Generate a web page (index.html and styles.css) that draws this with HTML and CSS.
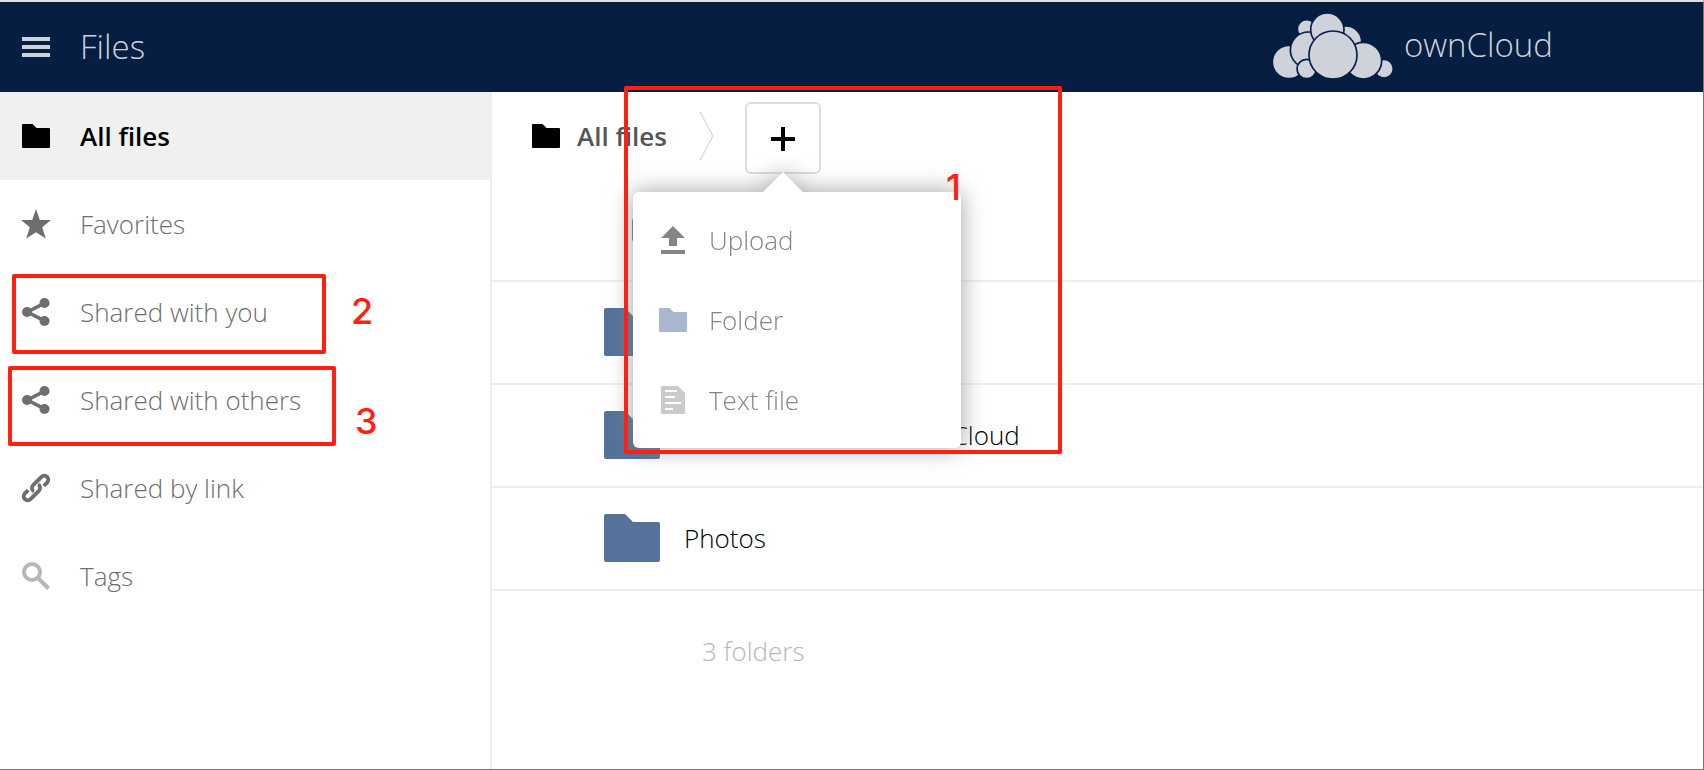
FILE: index.html
```
<!DOCTYPE html>
<html lang="en">
<head>
    <meta charset="UTF-8">
    <meta name="viewport" content="width=device-width, initial-scale=1.0">
    <title>Files - ownCloud</title>
    <link rel="stylesheet" href="styles.css">
</head>
<body>
  <svg class="sprite" aria-hidden="true">
    <symbol id="folder" viewBox="0 0 28 24">
      <path d="M1 0h9.500l4 4H27q1 0 1 1v18q0 1-1 1H1q-1 0-1-1V1q0-1 1-1z"/>
    </symbol>
    <symbol id="share" viewBox="0 0 28 28">
      <path d="M22.500 5.200 5.500 14l17 8.800" fill="none" stroke="currentColor" stroke-width="3.600"/>
      <circle cx="5" cy="14" r="5"/>
      <circle cx="22.500" cy="5" r="5"/>
      <circle cx="22.500" cy="23" r="5"/>
    </symbol>
  </svg>

  <header class="header">
    <button class="menuBtn" type="button" aria-label="Menu">
      <span></span>
      <span></span>
      <span></span>
    </button>
    <h1>Files</h1>
    <a class="logo" href="#">
      <svg width="126" height="68" viewBox="0 0 378 204">
        <circle cx="110" cy="54" r="28"/>
        <circle cx="228" cy="92" r="47"/>
        <circle cx="57" cy="153" r="50"/>
        <circle cx="115" cy="117" r="54"/>
        <circle cx="172" cy="56" r="50"/>
        <circle cx="342" cy="173" r="28"/>
        <circle cx="280" cy="149" r="55"/>
        <circle cx="110" cy="174" r="29"/>
        <circle cx="189" cy="132" r="72"/>
      </svg>
      <span>ownCloud</span>
    </a>
  </header>

  <div class="content">
    <nav class="sidebar">
      <ul>
        <li class="active">
          <a href="#"><svg width="28" height="24"><use href="#folder"/></svg>All files</a>
        </li>
        <li>
          <a href="#"><svg width="28" height="28" viewBox="1 1 28 28"><path d="M15 0l3.800 11H30l-8.800 7.200 3.600 11.300L15 23.200l-9.800 6.300 3.600-11.300L0 11h11.200z"/></svg>Favorites</a>
        </li>
        <li>
          <a href="#"><svg width="28" height="28"><use href="#share"/></svg>Shared with you</a>
          <div class="mark mark2"><b>2</b></div>
        </li>
        <li>
          <a href="#"><svg width="28" height="28"><use href="#share"/></svg>Shared with others</a>
          <div class="mark mark3"><b>3</b></div>
        </li>
        <li>
          <a href="#"><svg width="28" height="28" viewBox="-14 -14 28 28"><g fill="none" stroke="currentColor" stroke-width="3.800" transform="rotate(-45)"><path d="M-4 1A4 4 0 0 1 0-4H11.700A4 4 0 0 1 11.700 4H7"/><path d="M4-1A4 4 0 0 1 0 4H-11.700A4 4 0 0 1-11.700-4H-7"/></g></svg>Shared by link</a>
        </li>
        <li class="tags">
          <a href="#"><svg width="28" height="28" viewBox="0 0 28 28"><g fill="none" stroke="currentColor" stroke-width="4"><circle cx="10" cy="10" r="8"/><path d="M16 16l10.500 10.500"/></g></svg>Tags</a>
        </li>
      </ul>
    </nav>

    <main class="files">
      <div class="controls">
        <a class="crumb" href="#"><svg width="28" height="24"><use href="#folder"/></svg>All files</a>
        <svg class="arrow" width="16" height="48" viewBox="0 0 16 48"><path d="M1 0l13 24L1 48"/></svg>
        <div class="newWrap">
          <button class="newBtn" type="button" aria-label="New">
            <svg width="24" height="24" viewBox="0 0 24 24"><path d="M10 0h4v10h10v4H14v10h-4V14H0v-4h10z"/></svg>
          </button>
          <ul class="newMenu">
            <li><a href="#"><svg width="28" height="28" viewBox="0 0 28 28"><path d="M14 0l12 12h-8v8h-8v-8H2zM2 24h24v4H2z"/></svg>Upload</a></li>
            <li class="folder"><a href="#"><svg width="28" height="24"><use href="#folder"/></svg>Folder</a></li>
            <li class="text"><a href="#"><svg width="28" height="28" viewBox="0 0 28 28"><path d="M3 0h16l7 7v20q0 1-1 1H3q-1 0-1-1V1q0-1 1-1z"/><path d="M6 5h12M6 11h10M6 17h16M6 23h8" stroke="#fff" stroke-width="2"/></svg>Text file</a></li>
          </ul>
          <div class="mark mark1"><b>1</b></div>
        </div>
      </div>

      <table>
        <thead>
          <tr>
            <th class="thumb"><input type="checkbox" aria-label="Select all"></th>
            <th></th>
          </tr>
        </thead>
        <tbody>
          <tr>
            <td class="thumb"><svg width="56" height="48"><use href="#folder"/></svg></td>
            <td><a href="#" aria-label="Documents"></a></td>
          </tr>
          <tr>
            <td class="thumb"><svg width="56" height="48"><use href="#folder"/></svg></td>
            <td><a href="#">Learn more about ownCloud</a></td>
          </tr>
          <tr>
            <td class="thumb"><svg width="56" height="48"><use href="#folder"/></svg></td>
            <td><a href="#">Photos</a></td>
          </tr>
        </tbody>
      </table>
      <p class="summary">3 folders</p>
    </main>
  </div>
</body>
</html>
```
FILE: styles.css
```
* {
  box-sizing: border-box;
}

body {
  display: flex;
  flex-direction: column;
  min-height: 100vh;
  margin: 0;
  border-top: 2px solid #dedede;
  border-right: 1px solid #777;
  border-bottom: 1px solid #777;
  background-color: #fff;
  font-family: "Open Sans", sans-serif;
  font-size: 26px;
  font-weight: 300;
  line-height: 34px;
}

ul {
  list-style: none;
  margin: 0;
  padding: 0;
}

a {
  color: inherit;
  text-decoration: none;
}

svg {
  fill: currentColor;
  flex-shrink: 0;
}

.sprite {
  position: absolute;
  width: 0;
  height: 0;
}

/* 헤더 */
.header {
  display: flex;
  align-items: center;
  height: 90px;
  padding: 0 150px 0 22px;
  background-color: #051e42;
  color: #cdd2db;
}

.header h1 {
  margin: 0 0 0 30px;
  font-size: 33px;
  font-weight: 300;
}

.menuBtn {
  display: flex;
  flex-direction: column;
  gap: 4px;
  width: 28px;
  padding: 0;
  border: 0;
  background: none;
  cursor: pointer;
}

.menuBtn span {
  height: 4px;
  background-color: #cdd2db;
}

.logo {
  display: flex;
  align-items: center;
  gap: 8px;
  margin-left: auto;
  padding-bottom: 4px;
  font-size: 33px;
}

.logo circle {
  stroke: #051e42;
  stroke-width: 5;
}

.content {
  display: flex;
  flex: 1;
}

/* 왼쪽 메뉴 */
.sidebar {
  width: 492px;
  border-right: 2px solid #eee;
  color: #6e6e6e;
}

.sidebar li {
  position: relative;
}

.sidebar a {
  display: flex;
  align-items: center;
  gap: 30px;
  height: 88px;
  padding: 0 0 1px 22px;
}

.sidebar svg {
  overflow: visible;
}

.sidebar .active {
  background-color: #f0f0f0;
  color: #000;
  font-weight: 600;
}

.sidebar .tags svg {
  color: #b7b7b7;
}

/* 파일 목록 */
.files {
  flex: 1;
}

.controls {
  display: flex;
  align-items: flex-start;
  height: 88px;
  padding: 10px 40px;
}

.crumb {
  display: flex;
  align-items: center;
  gap: 17px;
  height: 68px;
  padding-bottom: 1px;
  color: #555;
  font-weight: 600;
}

.crumb svg {
  color: #000;
}

.arrow {
  margin: 10px 30px 0 32px;
  fill: none;
  stroke: #ccc;
  stroke-width: 1;
}

.newWrap {
  position: relative;
}

.newBtn {
  display: flex;
  align-items: center;
  justify-content: center;
  width: 76px;
  height: 72px;
  padding: 2px 0 0;
  border: 2px solid #ddd;
  border-radius: 6px;
  background-color: #fff;
  color: #000;
  cursor: pointer;
}

.newMenu {
  position: absolute;
  top: 90px;
  right: -140px;
  width: 328px;
  padding: 8px 0;
  border-radius: 6px;
  background-color: #fff;
  color: #858585;
  filter: drop-shadow(0 0 12px rgba(130,130,130,.75));
}

.newMenu::before {
  content: "";
  position: absolute;
  bottom: 100%;
  right: 158px;
  border: 20px solid transparent;
  border-top: 0;
  border-bottom-color: #fff;
}

.newMenu a {
  display: flex;
  align-items: center;
  gap: 22px;
  height: 80px;
  padding: 0 0 1px 26px;
}

.newMenu .folder svg {
  color: #a9b7cf;
}

.newMenu .text svg {
  color: #cbcbcb;
}

table {
  width: 100%;
  border-collapse: collapse;
}

th, td {
  height: 103px;
  padding: 0 0 2px;
  border-bottom: 2px solid #eee;
  text-align: left;
  font-weight: 300;
}

th {
  height: 101px;
}

.thumb {
  width: 192px;
  padding-left: 112px;
}

th.thumb {
  padding: 0 0 0 140px;
}

.thumb svg {
  display: block;
  color: #54729a;
}

.thumb input {
  display: block;
  width: 24px;
  height: 24px;
  margin: 0;
}

.summary {
  margin: 43px 0 0 210px;
  color: #b7b7b7;
}

/* 빨간 표시 */
.mark {
  position: absolute;
  border: 4px solid #ff2011;
  border-radius: 2px;
  color: #ff2011;
  font-family: Inter, "Liberation Sans", sans-serif;
  font-size: 36px;
  pointer-events: none;
}

.mark b {
  position: absolute;
  font-weight: 500;
}

.mark1 {
  top: -16px;
  left: -121px;
  width: 438px;
  height: 368px;
}

.mark1 b {
  top: 80px;
  right: 97px;
}

.mark2 {
  top: 6px;
  left: 12px;
  width: 314px;
  height: 80px;
}

.mark2 b {
  top: 16px;
  left: 335px;
}

.mark3 {
  top: 10px;
  left: 8px;
  width: 328px;
  height: 80px;
}

.mark3 b {
  top: 34px;
  left: 343px;
}
```
